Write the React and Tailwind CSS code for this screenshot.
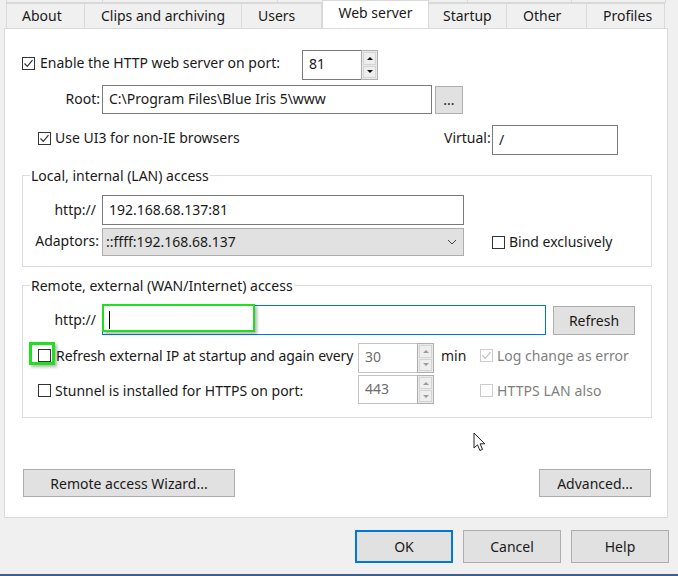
// App.jsx
const FONT = "font-['Noto_Sans',sans-serif] text-[14px] leading-none text-[#1a1a1a]";
const INPUT = "flex items-center border border-[#7a7a7a] bg-white px-[6px]";
const BTN = "flex items-center justify-center border border-[#adadad] bg-[#e1e1e1]";

function Check({ checked, disabled }) {
  return (
    <span className={"flex size-[13px] shrink-0 items-center justify-center border bg-white " + (disabled ? "border-[#cccccc]" : "border-[#333333]")}>
      {checked && (
        <svg width="11" height="11" viewBox="0 0 11 11" fill="none">
          <path d="M1.5 5.5l2.8 2.8 5.2-6.2" stroke={disabled ? "#bfbfbf" : "#333333"} strokeWidth="1.2" />
        </svg>
      )}
    </span>
  );
}

function Spinner({ disabled, w, h, value }) {
  const edge = disabled ? "border-[#c4c4c4]" : "border-[#7a7a7a]";
  const arrow = disabled ? "#9a9a9a" : "#111111";
  return (
    <div className={"flex bg-white " + w + " " + h}>
      <div className={"flex flex-1 items-center border border-r-0 pb-[2px] pl-[6px] " + edge + (disabled ? " text-[#6d6d6d]" : "")}>{value}</div>
      <div className="flex w-[17px] flex-col gap-[1px] border border-[#b0b0b0] bg-[#e9e9e9] p-[1px]">
        <div className="flex flex-1 items-center justify-center border border-[#d4d4d4] bg-[#eeeeee]">
          <svg width="6" height="3" viewBox="0 0 6 3"><path d="M3 0l3 3H0z" fill={arrow} /></svg>
        </div>
        <div className="flex flex-1 items-center justify-center border border-[#d4d4d4] bg-[#eeeeee]">
          <svg width="6" height="3" viewBox="0 0 6 3"><path d="M0 0h6L3 3z" fill={arrow} /></svg>
        </div>
      </div>
    </div>
  );
}

function Tab({ w, label, active }) {
  if (active) {
    return (
      <div className={"relative z-10 -mt-[3px] flex h-[28px] items-center justify-center border border-b-0 border-[#d9d9d9] bg-white pb-[3px] " + w}>{label}</div>
    );
  }
  return (
    <div className={"flex h-[25px] items-center border border-b-0 border-l-0 border-[#d9d9d9] bg-[#f0f0f0] " + w}>{label}</div>
  );
}

export default function App() {
  return (
    <div className={"flex h-[576px] w-[678px] flex-col overflow-hidden bg-[#f0f0f0] " + FONT}>
      {/* second row of tabs, mostly hidden */}
      <div className="ml-[6px] flex h-[3px] w-[660px] border-b border-[#d9d9d9]">
        <div className="w-[97px] border-x border-[#d9d9d9]" />
        <div className="w-[175px] border-r border-[#d9d9d9]" />
        <div className="w-[190px] border-r border-[#d9d9d9]" />
        <div className="w-[104px] border-r border-[#d9d9d9]" />
        <div className="flex-1 border-r border-[#d9d9d9]" />
      </div>

      <div className="flex pl-[6px]">
        <div className="flex h-[25px] w-[79px] items-center border border-b-0 border-[#d9d9d9] pl-[15px]">About</div>
        <Tab w="w-[157px] justify-center" label="Clips and archiving" />
        <Tab w="w-[80px] pl-[16px]" label="Users" />
        <Tab w="w-[107px]" label="Web server" active />
        <Tab w="w-[78px] pl-[14px]" label="Startup" />
        <Tab w="w-[80px] pl-[16px]" label="Other" />
        <Tab w="w-[78px] pl-[16px]" label="Profiles" />
      </div>

      {/* page */}
      <div className="relative ml-[4px] h-[490px] w-[664px] border border-[#d9d9d9] bg-white pt-[21px]">
        <div className="flex h-[30px] items-center pl-[17px]">
          <div className="mb-[4px] flex items-center">
            <Check checked />
            <span className="ml-[5px] w-[262px]">Enable the HTTP web server on port:</span>
          </div>
          <Spinner w="w-[76px]" h="h-[30px]" value="81" />
        </div>

        <div className="mt-[5px] flex h-[29px]">
          <div className="flex w-[97px] items-center justify-end pr-[2px] pb-[2px]">Root:</div>
          <div className={INPUT + " w-[330px] pb-[2px]"}>C:\Program Files\Blue Iris 5\www</div>
          <div className={BTN + " mt-[1px] ml-[3px] w-[28px]"}>...</div>
        </div>

        <div className="mt-[11px] flex h-[30px] items-center pl-[33px]">
          <div className="mb-[4px] flex items-center">
            <Check checked />
            <span className="ml-[4px] w-[389px]">Use UI3 for non-IE browsers</span>
            <span className="w-[48px]">Virtual:</span>
          </div>
          <div className={INPUT + " h-[30px] w-[126px]"}>/</div>
        </div>

        {/* LAN group */}
        <div className="relative mt-[20px] ml-[17px] h-[92px] w-[630px] border border-[#dcdcdc] pt-[19px]">
          <span className="absolute -top-[7px] left-[7px] bg-white px-[1px]">Local, internal (LAN) access</span>
          <div className="flex h-[30px]">
            <div className="flex w-[73px] items-center justify-end">http://</div>
            <div className={INPUT + " ml-[6px] w-[362px]"}>192.168.68.137:81</div>
          </div>
          <div className="mt-[3px] flex h-[28px]">
            <div className="flex w-[76px] items-center justify-end pb-[3px]">Adaptors:</div>
            <div className="ml-[3px] flex w-[362px] items-center justify-between border border-[#adadad] bg-[#e1e1e1] pr-[6px] pl-[3px]">
              <span>::ffff:192.168.68.137</span>
              <svg width="10" height="6" viewBox="0 0 10 6" fill="none"><path d="M1 1l4 4 4-4" stroke="#444444" strokeWidth="1" /></svg>
            </div>
            <div className="ml-[28px] flex items-center">
              <Check />
              <span className="ml-[4px]">Bind exclusively</span>
            </div>
          </div>
        </div>

        {/* WAN group */}
        <div className="relative mt-[18px] ml-[17px] h-[133px] w-[630px] border border-[#dcdcdc] pt-[19px]">
          <span className="absolute -top-[7px] left-[7px] bg-white px-[1px]">Remote, external (WAN/Internet) access</span>
          <div className="flex h-[30px]">
            <div className="flex w-[73px] items-center justify-end">http://</div>
            <div className="relative ml-[6px] flex w-[444px] items-center border border-[#0078d7] bg-white pl-[6px]">
              <span className="h-[18px] w-[1px] bg-black" />
              <div className="absolute -top-[2px] -left-[1px] h-[28px] w-[153px] border-2 border-[#1fe01f] shadow-[2px_2px_3px_rgba(0,0,0,0.3)]" />
            </div>
            <div className={BTN + " mt-[1px] ml-[7px] w-[82px]"}>Refresh</div>
          </div>

          <div className="mt-[8px] flex h-[30px] items-center pl-[15px]">
            <div className="relative mb-[5px] flex w-[320px] items-center">
              <Check />
              <span className="ml-[5px] tracking-[-0.07px]">Refresh external IP at startup and again every</span>
              <div className="absolute -top-[7px] -left-[9px] h-[23px] w-[26px] border-[3px] border-[#1fe01f] shadow-[2px_2px_3px_rgba(0,0,0,0.3)]" />
            </div>
            <Spinner disabled w="w-[76px]" h="h-[30px]" value="30" />
            <div className="mb-[5px] flex items-center">
              <span className="ml-[7px] w-[39px]">min</span>
              <Check checked disabled />
              <span className="ml-[4px] text-[#7f7f7f]">Log change as error</span>
            </div>
          </div>

          <div className="mt-[2px] flex h-[29px] items-center pl-[15px]">
            <div className="flex w-[320px] items-center pt-[2px]">
              <Check />
              <span className="ml-[4px]">Stunnel is installed for HTTPS on port:</span>
            </div>
            <Spinner disabled w="w-[76px]" h="h-[29px]" value="443" />
            <div className="flex items-center pt-[2px]">
              <span className="ml-[7px] w-[39px]" />
              <Check disabled />
              <span className="ml-[4px] tracking-[0.1px] text-[#7f7f7f]">HTTPS LAN also</span>
            </div>
          </div>
        </div>

        <div className="mt-[51px] ml-[18px] flex h-[28px] w-[628px] justify-between">
          <div className={BTN + " w-[212px] pt-[2px]"}>Remote access Wizard...</div>
          <div className={BTN + " w-[112px] pt-[2px]"}>Advanced...</div>
        </div>

        {/* mouse pointer */}
        <svg className="absolute top-[403px] left-[468px]" width="14" height="20" viewBox="0 0 14 20">
          <path d="M1 1v15l3.5-3.2 2.4 5.7 2.6-1.1-2.4-5.6h4.6z" fill="#ffffff" stroke="#222222" strokeWidth="1" />
        </svg>
      </div>

      <div className="mt-[12px] ml-[355px] flex h-[33px] gap-[10px]">
        <div className="flex w-[98px] items-center justify-center border-2 border-[#0078d7] bg-[#e1e1e1]">OK</div>
        <div className={BTN + " w-[98px]"}>Cancel</div>
        <div className={BTN + " w-[98px]"}>Help</div>
      </div>

      <div className="mt-auto h-[2px] bg-[#3c5f8f]" />
    </div>
  );
}
